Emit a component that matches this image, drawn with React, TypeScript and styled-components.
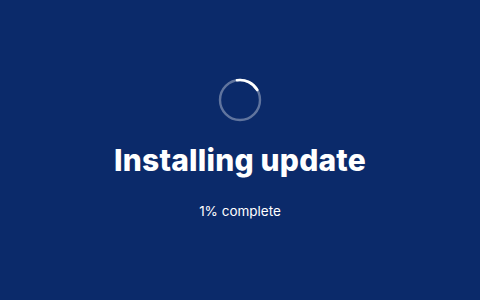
import React from "react";
import styled, { createGlobalStyle } from "styled-components";

const GlobalStyle = createGlobalStyle`
  html, body {
    margin: 0;
    padding: 0;
    background-color: #0b2a6a;
  }
`;

export default function App() {
  return (
    <>
      <GlobalStyle />
      <Screen>
        <Spinner viewBox="0 0 44 44">
          <circle cx="22" cy="22" r="20" fill="none" stroke="rgba(255,255,255,0.35)" strokeWidth="2.4" />
          <path
            d="M19 2.2 A20 20 0 0 1 39.3 12"
            fill="none"
            stroke="#ffffff"
            strokeWidth="2.6"
            strokeLinecap="round"
          />
        </Spinner>
        <Title>Installing update</Title>
        <Status>1% complete</Status>
      </Screen>
    </>
  );
}

const Screen = styled.div`
  width: 480px;
  height: 300px;
  box-sizing: border-box;
  padding-top: 78px;
  display: flex;
  flex-direction: column;
  align-items: center;
  background-color: #0b2a6a;
  color: #ffffff;
  font-family: Inter, "Noto Sans", sans-serif;
`;

const Spinner = styled.svg`
  width: 44px;
  height: 44px;
`;

const Title = styled.h1`
  margin: 19px 0 0;
  font-size: 30px;
  line-height: 38px;
  font-weight: 800;
  letter-spacing: 0.2px;
`;

const Status = styled.div`
  margin-top: 23px;
  font-size: 13.5px;
  line-height: 18px;
  font-weight: 400;
`;
